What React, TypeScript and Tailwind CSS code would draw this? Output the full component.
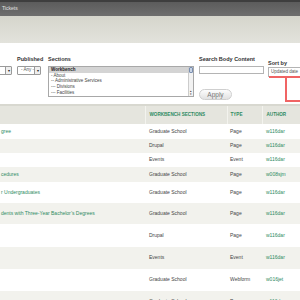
import React from "react";

type Row = {
  title: string;
  section: string;
  type: string;
  author: string;
  h: string;
};

const ROWS: Row[] = [
  { title: "gree", section: "Graduate School", type: "Page", author: "w116dar", h: "h-[15px]" },
  { title: "", section: "Drupal", type: "Page", author: "w116dar", h: "h-[14px]" },
  { title: "", section: "Events", type: "Event", author: "w116dar", h: "h-[14px]" },
  { title: "cedures", section: "Graduate School", type: "Page", author: "w008sjm", h: "h-[15px]" },
  { title: "r Undergraduates", section: "Graduate School", type: "Page", author: "w116dar", h: "h-[21px]" },
  { title: "dents with Three-Year Bachelor\u2019s Degrees", section: "Graduate School", type: "Page", author: "w116dar", h: "h-[21px]" },
  { title: "", section: "Drupal", type: "Page", author: "w116dar", h: "h-[23px]" },
  { title: "", section: "Events", type: "Event", author: "w116dar", h: "h-[22px]" },
  { title: "", section: "Graduate School", type: "Webform", author: "w016jet", h: "h-[22px]" },
  { title: "", section: "Graduate School", type: "Page", author: "w116dar", h: "h-[22px]" },
];

const SECTIONS = ["- About", "-- Administrative Services", "--- Divisions", "--- Facilities"];

function MiniSelect({ label, className }: { label: string; className: string }) {
  return (
    <div
      className={`flex h-[9px] items-center justify-between rounded-[1px] border border-[#9a9a9a] bg-white pl-[3px] text-[4.5px] text-[#555] ${className}`}
    >
      <span>{label}</span>
      <span className="flex h-full w-[6px] items-center justify-center border-l border-[#9a9a9a] bg-[#eee] text-[4px] leading-none text-[#222]">
        ▾
      </span>
    </div>
  );
}

export default function App() {
  return (
    <div className="relative h-[300px] w-[300px] overflow-hidden bg-white font-['Liberation_Sans',Arial,sans-serif]">
      {/* admin bar */}
      <div className="flex h-[16px] items-center border-t-2 border-[#3e3e3e] bg-gradient-to-b from-[#5c5c5c] to-[#6e6e6e] pl-[2px] text-[5px] text-[#e2e2e2]">
        Tickets
      </div>
      <div className="h-[27px] bg-gradient-to-b from-[#d5d5cc] to-[#e3e3dc]" />

      {/* exposed filters */}
      <div className="flex h-[61px] items-start pt-[13px] text-[#333]">
        <div className="-ml-[18px] mt-[10px] w-[35px] shrink-0">
          <MiniSelect label="- Any -" className="w-[30px]" />
        </div>
        <div className="w-[31px] shrink-0">
          <div className="h-[7px] text-[5.5px] font-bold leading-[7px]">Published</div>
          <MiniSelect label="- Any -" className="mt-[3px] w-[24px]" />
        </div>
        <div className="w-[151px] shrink-0">
          <div className="h-[7px] text-[5.5px] font-bold leading-[7px]">Sections</div>
          <div className="mt-[3px] flex h-[31px] w-[146px] border border-[#a8a8a8] bg-white">
            <div className="flex-1 text-[4.5px] leading-[5.7px] text-[#444]">
              <div className="bg-[#d4d4d4] pl-[2px] font-bold text-[#222]">Workbench</div>
              {SECTIONS.map((s) => (
                <div key={s} className="pl-[2px]">
                  {s}
                </div>
              ))}
            </div>
            <div className="flex w-[5px] flex-col justify-between border-l border-[#ccc] bg-[#f2f2f2]">
              <div className="h-[6px] rounded-[1px] border border-[#7a8fb0] bg-[#c8d3e4]" />
              <div className="flex flex-col items-center text-[3px] leading-[3px] text-[#333]">
                <span>▴</span>
                <span>▾</span>
              </div>
            </div>
          </div>
        </div>
        <div className="w-[69px] shrink-0">
          <div className="h-[7px] text-[5.5px] font-bold leading-[7px]">Search Body Content</div>
          <div className="mt-[3px] h-[8px] w-[65px] border border-[#b4b4b4] bg-white" />
          <button className="mt-[15px] flex h-[11px] w-[33px] items-center justify-center rounded-[6px] border border-[#cfcfcf] bg-gradient-to-b from-[#fdfdfd] to-[#e2e2e2] text-[6.5px] text-[#777]">
            Apply
          </button>
        </div>
        <div className="mt-[4px] w-[40px] shrink-0">
          <div className="h-[7px] text-[5.5px] font-bold leading-[7px]">Sort by</div>
          <div className="h-[10px] w-[40px] border border-[#b4b4b4] bg-white pl-[2px] text-[4.5px] leading-[8px] text-[#555]">
            Updated date
          </div>
        </div>
      </div>

      {/* red annotation over sort control */}
      <div className="absolute left-[269px] top-[76px] h-[2px] w-[31px] bg-[#f06464]" />
      <div className="absolute left-[285px] top-[76px] h-[26px] w-[30px] border-b-2 border-l-2 border-[#f06464]" />

      {/* results table */}
      <table className="w-[340px] table-fixed border-collapse text-[5px]">
        <colgroup>
          <col className="w-[145px]" />
          <col className="w-[82px]" />
          <col className="w-[35px]" />
          <col className="w-[78px]" />
        </colgroup>
        <thead>
          <tr className="h-[19px] border-t-2 border-[#d8d8d0] bg-[#e5e5de] text-left text-[4.6px] uppercase text-[#2e8b62]">
            <th className="font-bold" />
            <th className="border-l border-[#f3f3ee] pl-[4px] font-bold">Workbench Sections</th>
            <th className="border-l border-[#f3f3ee] pl-[3px] font-bold">Type</th>
            <th className="border-l border-[#f3f3ee] pl-[4px] font-bold">Author</th>
          </tr>
        </thead>
        <tbody>
          {ROWS.map((r, i) => (
            <tr key={i} className={`${r.h} ${i % 2 === 1 ? "bg-[#f2f2ed]" : "bg-white"}`}>
              <td className="overflow-hidden whitespace-nowrap pl-[1px] text-[#2e8b62]">{r.title}</td>
              <td className="pl-[4px] text-[#444]">{r.section}</td>
              <td className="pl-[3px] text-[#444]">{r.type}</td>
              <td className="pl-[4px] text-[#2e8b62]">{r.author}</td>
            </tr>
          ))}
        </tbody>
      </table>
    </div>
  );
}
